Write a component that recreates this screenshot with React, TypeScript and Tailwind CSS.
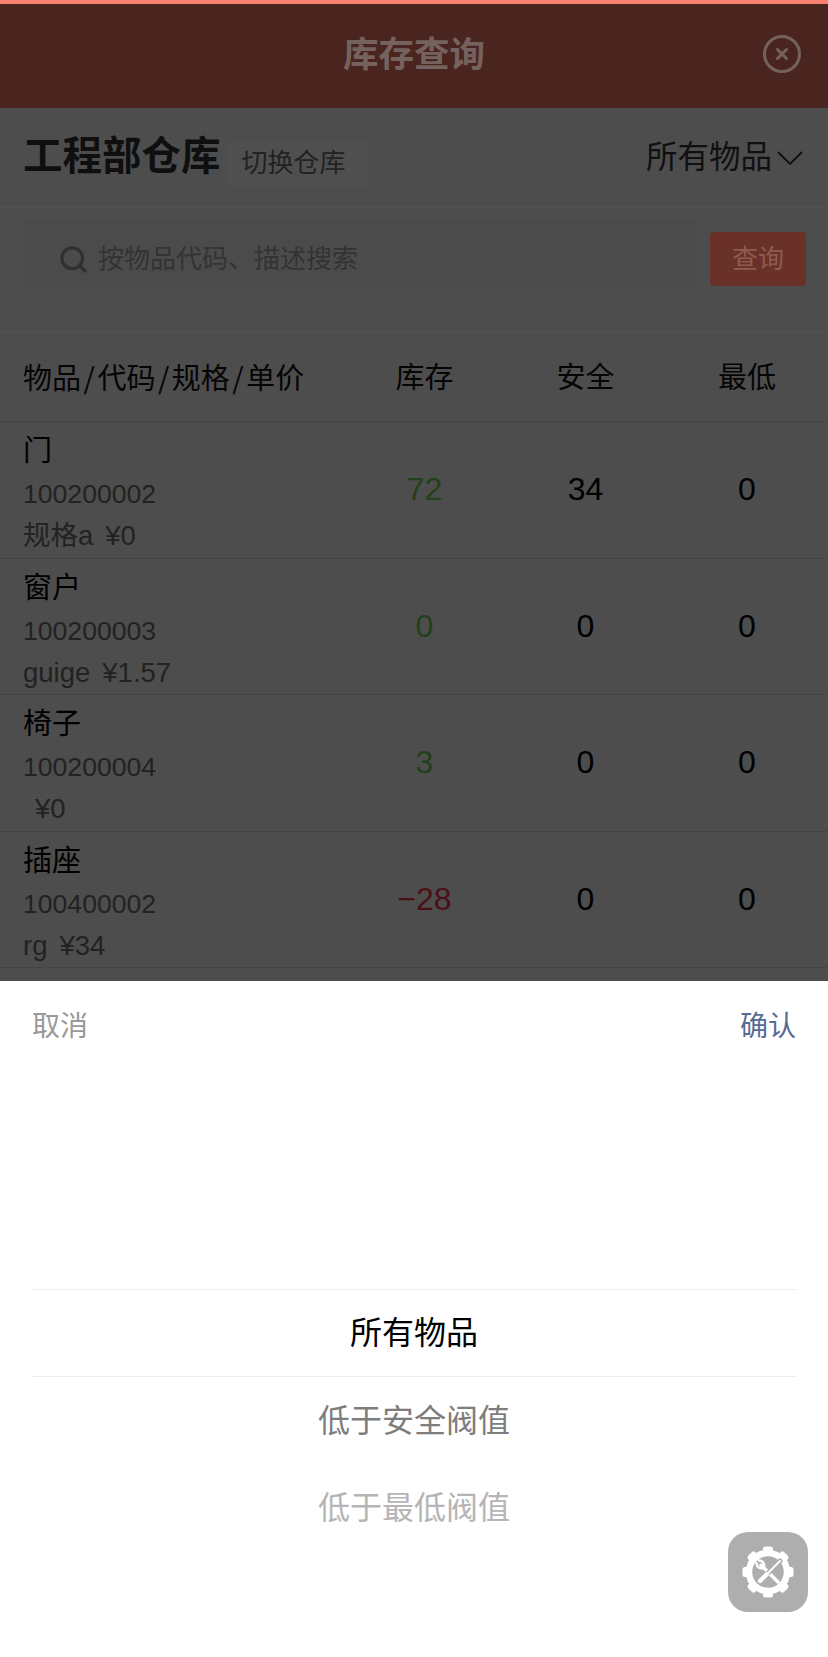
import React from 'react';
import { Search, X } from 'lucide-react';

type Row = {
  name: string;
  code: string;
  spec: string;
  price: string;
  stock: string;
  stockColor: string;
  safe: string;
  min: string;
};

const rows: Row[] = [
  { name: '门', code: '100200002', spec: '规格a', price: '¥0', stock: '72', stockColor: 'text-[#22401a]', safe: '34', min: '0' },
  { name: '窗户', code: '100200003', spec: 'guige', price: '¥1.57', stock: '0', stockColor: 'text-[#22401a]', safe: '0', min: '0' },
  { name: '椅子', code: '100200004', spec: '', price: '¥0', stock: '3', stockColor: 'text-[#22401a]', safe: '0', min: '0' },
  { name: '插座', code: '100400002', spec: 'rg', price: '¥34', stock: '−28', stockColor: 'text-[#4a1015]', safe: '0', min: '0' },
];

const GearIcon = () => (
  <svg viewBox="0 0 52 52" className="h-[52px] w-[52px]" fill="none" strokeLinecap="round">
    <circle cx="26" cy="26" r="19" stroke="#fff" strokeWidth="6.5" strokeLinecap="butt" />
    {[0, 45, 90, 135, 180, 225, 270, 315].map((angle) => (
      <rect key={angle} x="21" y="0.5" width="10" height="8" rx="2.5" fill="#fff" transform={`rotate(${angle} 26 26)`} />
    ))}
    <path d="M19 19l17 17" stroke="#fff" strokeWidth="3.4" />
    <path d="M14.5 17a5 5 0 0 0 6.5 5M17 14.5a5 5 0 0 1 5 6.5" stroke="#fff" strokeWidth="2.4" />
    <path d="M38 15L18 35" stroke="#aeaeae" strokeWidth="5" />
    <path d="M38 15L27 26" stroke="#fff" strokeWidth="2" />
    <path d="M25 28l-7 7" stroke="#fff" strokeWidth="4.4" />
  </svg>
);

const Slash = () => <span className="mx-[2.5px] font-['Noto_Sans_CJK_SC',sans-serif]">/</span>;

export default function App() {
  return (
    <div className="relative h-[1657px] w-[828px] overflow-hidden bg-[#4d4d4d] font-['Liberation_Sans','Noto_Sans_CJK_SC',sans-serif] text-black">
      <div className="h-[4px] bg-[#fa8070]" />
      <header className="relative flex h-[104px] items-center justify-center bg-[#4a241f]">
        <h1 className="text-[35.5px] font-bold text-[#75625e]">库存查询</h1>
        <div className="absolute right-[27px] top-[31px] flex h-[38px] w-[38px] items-center justify-center rounded-full border-[3px] border-[#75615e]">
          <X size={18} strokeWidth={4} className="text-[#75615e]" />
        </div>
      </header>

      <div className="flex h-[100px] items-center justify-between border-b border-[#525252] pl-[23px] pr-[25px]">
        <div className="flex items-center">
          <span className="mb-[2px] w-[200px] text-[39.5px] font-bold text-[#0f0f0f]">工程部仓库</span>
          <span className="ml-[3px] mt-[12px] flex h-[50px] w-[142px] items-center justify-center bg-[#4f4f4f] pr-[7px] text-[26px] text-[#222222]">
            切换仓库
          </span>
        </div>
        <div className="flex items-center gap-[5px] text-[#101010]">
          <span className="text-[31.5px]">所有物品</span>
          <svg viewBox="0 0 26 14" className="h-[14px] w-[26px]" fill="none" stroke="currentColor" strokeWidth="1.8">
            <path d="M1 1l12 12L25 1" />
          </svg>
        </div>
      </div>

      <div className="flex h-[124px] items-start border-b border-[#535353] pl-[23px] pr-[22px] pt-[12px]">
        <div className="flex h-[70px] w-[673px] items-center bg-[#4b4b4b] pl-[35px] pt-[8px]">
          <Search size={31} strokeWidth={2.5} className="text-[#303030]" />
          <span className="ml-[9px] text-[26px] text-[#333333]">按物品代码、描述搜索</span>
        </div>
        <button className="ml-[14px] mt-[12px] flex h-[54px] w-[96px] items-center justify-center rounded-[4px] bg-[#693127] text-[26px] text-[#8f5a50]">
          查询
        </button>
      </div>

      <div className="grid h-[90px] grid-cols-[344px_161px_161px_162px] items-center border-b border-[#444444] pt-[4px] text-[29px] text-[#050505]">
        <span className="pl-[23px]">
          物品<Slash />代码<Slash />规格<Slash />单价
        </span>
        <span className="text-center">库存</span>
        <span className="text-center">安全</span>
        <span className="text-center">最低</span>
      </div>

      {rows.map((row) => (
        <div
          key={row.code}
          className="grid h-[136.5px] grid-cols-[344px_161px_161px_162px] border-b border-[#444444]"
        >
          <div className="pl-[23px] pt-[7px]">
            <div className="h-[44px] text-[29px] leading-[44px]">{row.name}</div>
            <div className="h-[42px] text-[26.6px] leading-[42px] text-[#222222]">{row.code}</div>
            <div className="flex h-[42px] gap-[12px] text-[27.5px] leading-[42px] text-[#222222]">
              <span>{row.spec}</span>
              <span>{row.price}</span>
            </div>
          </div>
          <div className={`pt-[47px] text-center text-[32px] leading-[40px] ${row.stockColor}`}>{row.stock}</div>
          <div className="pt-[47px] text-center text-[32px] leading-[40px]">{row.safe}</div>
          <div className="pt-[47px] text-center text-[32px] leading-[40px]">{row.min}</div>
        </div>
      ))}

      <div className="absolute bottom-0 left-0 right-0 h-[676px] bg-white">
        <div className="flex h-[92px] items-center justify-between px-[32px] text-[28px]">
          <span className="text-[#999999]">取消</span>
          <span className="text-[#576b95]">确认</span>
        </div>
        <div className="mx-[32px] mt-[216px] text-center text-[32px]">
          <div className="flex h-[88px] items-center justify-center border-y border-[#eeeeee] text-black">所有物品</div>
          <div className="flex h-[87px] items-center justify-center text-[#7d7d7d]">低于安全阀值</div>
          <div className="flex h-[87px] items-center justify-center text-[#b5b5b5]">低于最低阀值</div>
        </div>
      </div>

      <div className="absolute left-[728px] top-[1532px] flex h-[80px] w-[80px] items-center justify-center rounded-[20px] bg-[#aeaeae]">
        <GearIcon />
      </div>
    </div>
  );
}
